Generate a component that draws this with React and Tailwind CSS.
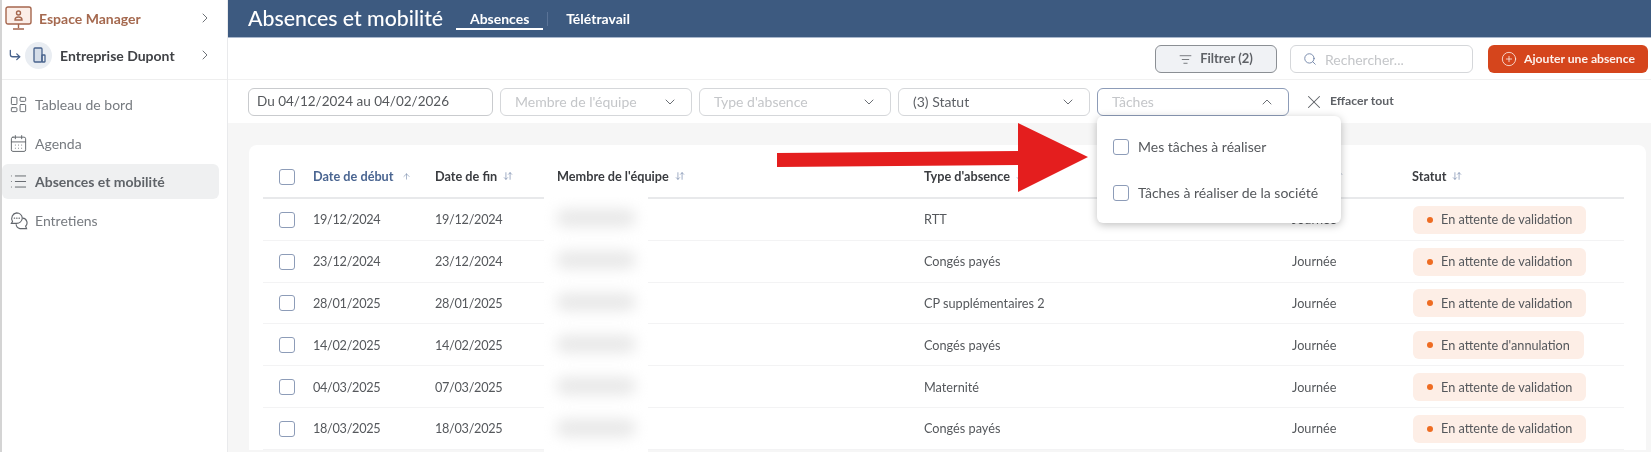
import { ChevronRight, ChevronDown, ChevronUp, LayoutDashboard, CalendarDays, List, ListFilter, Search, CirclePlus, X, ArrowDownUp, ArrowUp, CornerDownRight } from 'lucide-react'

const rows = [
  ['19/12/2024', '19/12/2024', 'RTT', 'En attente de validation'],
  ['23/12/2024', '23/12/2024', 'Congés payés', 'En attente de validation'],
  ['28/01/2025', '28/01/2025', 'CP supplémentaires 2', 'En attente de validation'],
  ['14/02/2025', '14/02/2025', 'Congés payés', "En attente d'annulation"],
  ['04/03/2025', '07/03/2025', 'Maternité', 'En attente de validation'],
  ['18/03/2025', '18/03/2025', 'Congés payés', 'En attente de validation'],
]

const gridCols = 'grid grid-cols-[50px_122px_122px_367px_368px_120px_1fr] items-center'

function Box() {
  return <span className="block h-[16px] w-[16px] rounded-[3px] border-[1.5px] border-[#8d9cb8] bg-white" />
}

function ChatIcon(props) {
  return (
    <svg viewBox="0 0 20 20" fill="none" stroke="currentColor" strokeWidth="1.2" {...props}>
      <path d="M8 2a6 6 0 0 1 6 5.500 6 6 0 0 1-6 5.500H2.500l1.200-2A6 6 0 0 1 8 2z" />
      <path d="M14.500 7.500a5 5 0 0 1 3 8.500l1 2.500h-7a5 5 0 0 1-4-4.500" />
      <path d="M5.500 7.500h.5M8 7.500h.5M10.500 7.500h.5" strokeLinecap="round" />
    </svg>
  )
}

function NavItem({ icon: Icon, label, active }) {
  return (
    <div className={`flex h-[35px] w-[217px] items-center gap-[7px] rounded-md pl-[7px] text-[14px] ${active ? 'bg-[#eff0f1] font-bold text-[#5f6368]' : 'text-[#777b80]'}`}>
      <Icon width={19} height={19} strokeWidth={1.2} className="shrink-0 text-[#62666c]" />
      {label}
    </div>
  )
}

function Sidebar() {
  return (
    <aside className="flex w-[228px] shrink-0 flex-col border-r border-[#e9eaec] border-l-2 border-l-[#d4d4d4] bg-white">
      <div className="flex h-[80px] flex-col border-b border-[#eeeeee]">
        <div className="flex h-[36px] items-center pl-[3px] pr-[14px]">
          <svg width="27" height="25" viewBox="0 0 27 25" fill="none" stroke="#a5664d" strokeWidth="1.4" className="shrink-0">
            <rect x="1" y="1" width="25" height="17" rx="2" fill="#fbeee8" />
            <path d="M13.500 18v4M8 23h11" />
            <circle cx="13.500" cy="7" r="2" />
            <path d="M10 14c0-2 1.500-3 3.500-3s3.500 1 3.500 3z" />
          </svg>
          <span className="ml-[7px] flex-1 text-[14px] font-bold text-[#a5694f]">Espace Manager</span>
          <ChevronRight size={16} strokeWidth={1.5} className="text-[#6f7378]" />
        </div>
        <div className="mt-[5px] flex h-[28px] items-center pl-[6px] pr-[14px]">
          <CornerDownRight size={14} strokeWidth={2.2} className="shrink-0 text-[#47628c]" />
          <span className="ml-[3px] flex h-[27px] w-[27px] shrink-0 items-center justify-center rounded-full bg-[#e9edf2]">
            <svg width="14" height="16" viewBox="0 0 14 16" fill="none" stroke="#47628c" strokeWidth="1.300">
              <rect x="2" y="1" width="8" height="14" rx="1" fill="#d5dde8" />
              <rect x="10" y="8" width="3" height="7" rx="0.500" />
            </svg>
          </span>
          <span className="ml-2 flex-1 text-[14px] font-bold text-[#3f4145]">Entreprise Dupont</span>
          <ChevronRight size={16} strokeWidth={1.5} className="text-[#6f7378]" />
        </div>
      </div>
      <nav className="mt-[7px] flex flex-col gap-[3.500px]">
        <NavItem icon={LayoutDashboard} label="Tableau de bord" />
        <NavItem icon={CalendarDays} label="Agenda" />
        <NavItem icon={List} label="Absences et mobilité" active />
        <NavItem icon={ChatIcon} label="Entretiens" />
      </nav>
    </aside>
  )
}

function Select({ label, width, placeholder, open }) {
  const Chevron = open ? ChevronUp : ChevronDown
  return (
    <div className={`flex h-[28px] items-center justify-between rounded-md border bg-white pl-[14px] pr-[13px] text-[14px] ${width} ${open ? 'border-[#8d9cb8]' : 'border-[#d5d7da]'}`}>
      <span className={placeholder ? 'text-[#c4c6c9]' : 'text-[#5e6166]'}>{label}</span>
      <Chevron size={16} strokeWidth={1.5} className="text-[#6b6f75]" />
    </div>
  )
}

function HeaderCell({ label, active }) {
  return (
    <div className={`flex items-center text-[12.700px] font-bold ${active ? 'text-[#4a6591]' : 'text-[#3a3c40]'}`}>
      {label}
      {active ? (
        <ArrowUp size={9} strokeWidth={1.5} className="ml-[9px] text-[#6a7fa3]" />
      ) : (
        <ArrowDownUp size={10} strokeWidth={1.5} className="ml-[6px] text-[#6a7fa3]" />
      )}
    </div>
  )
}

function Table() {
  return (
    <div className="relative ml-[21px] mr-[5px] mt-[22px] rounded-t-lg bg-white pl-[14px] pr-[22px]">
      <div className={`${gridCols} h-[54px] border-b-2 border-[#e8e9eb] pt-[11px]`}>
        <div className="pl-[16px]"><Box /></div>
        <HeaderCell label="Date de début" active />
        <HeaderCell label="Date de fin" />
        <HeaderCell label="Membre de l'équipe" />
        <HeaderCell label="Type d'absence" />
        <HeaderCell label="Durée" />
        <HeaderCell label="Statut" />
      </div>
      {rows.map((r, i) => (
        <div key={i} className={`${gridCols} h-[41.800px] border-b border-[#f3f3f4] pt-[1px] text-[12.700px] text-[#55585c]`}>
          <div className="pl-[16px]"><Box /></div>
          <div className="tracking-[-0.3px]">{r[0]}</div>
          <div className="tracking-[-0.3px]">{r[1]}</div>
          <div />
          <div>{r[2]}</div>
          <div>Journée</div>
          <div className="ml-[1px] flex h-[28px] w-fit items-center rounded-md bg-[#fdeee6] pl-[14px] pr-[14px]">
            <span className="mr-[8px] h-[6px] w-[6px] rounded-full bg-[#ee6c22]" />
            {r[3]}
          </div>
        </div>
      ))}
      {/* masked names */}
      <div className="absolute left-[295px] top-[52px] flex h-[262px] w-[104px] flex-col items-center overflow-hidden bg-white pt-[12px]">
        {rows.map((r, i) => (
          <div key={i} className="mb-[24px] h-[18px] w-[80px] shrink-0 rounded-full bg-[#e8e8e8] blur-[7px]" />
        ))}
      </div>
    </div>
  )
}

export default function App() {
  return (
    <div className="relative flex h-[452px] w-[1651px] overflow-hidden bg-white font-['Lato','Liberation_Sans',sans-serif] blur-[0.6px]">
      <Sidebar />
      <main className="flex min-w-0 flex-1 flex-col bg-[#f6f6f6]">
        <header className="flex h-[38px] shrink-0 items-center border-b border-[#a9b7cc] bg-[#3d5a80] pl-[20px] text-white">
          <h1 className="text-[21.300px] font-medium">Absences et mobilité</h1>
          <div className="ml-[13px] flex h-full items-center">
            <div className="relative flex h-full w-[87px] items-center justify-center text-[14px] font-bold">
              Absences
              <span className="absolute bottom-[7px] left-0 right-0 h-[2px] bg-white" />
            </div>
            <span className="mx-[4px] h-[14px] w-px bg-[#5a7397]" />
            <div className="ml-[14px] text-[14px] font-bold">Télétravail</div>
          </div>
        </header>
        <div className="flex h-[42px] shrink-0 items-center justify-end border-b border-[#f1f1f1] bg-white pr-[3px] pt-[1px]">
          <button className="flex h-[28px] w-[122px] items-center justify-center gap-[8px] rounded-md border-[1.5px] border-[#8b8f94] bg-[#f0f2f5] text-[13px] font-bold text-[#5e6166]">
            <ListFilter size={13} strokeWidth={1.5} />
            Filtrer (2)
          </button>
          <div className="ml-[13px] flex h-[28px] w-[183px] items-center gap-[8px] rounded-md border border-[#d5d7da] pl-[12px] text-[14px] text-[#c4c6c9]">
            <Search size={14} strokeWidth={1.5} className="text-[#6a7fa3]" />
            Rechercher...
          </div>
          <button className="ml-[15px] flex h-[28px] w-[160px] items-center justify-center gap-[7px] rounded-md bg-[#d5451c] text-[12.200px] font-bold text-[#fdf1ec]">
            <CirclePlus size={16} strokeWidth={1.2} />
            Ajouter une absence
          </button>
        </div>
        <div className="flex h-[43px] shrink-0 items-center gap-[7px] bg-white pl-[20px]">
          <div className="flex h-[28px] w-[245px] items-center rounded-md border border-[#c9cbce] pl-[8px] text-[13.500px] text-[#55585c]">Du 04/12/2024 au 04/02/2026</div>
          <Select label="Membre de l'équipe" width="w-[192px]" placeholder />
          <Select label="Type d'absence" width="w-[192px]" placeholder />
          <Select label="(3) Statut" width="w-[192px]" />
          <Select label="Tâches" width="w-[192px]" placeholder open />
          <div className="ml-[7px] flex items-center gap-[5px] text-[12.200px] font-bold text-[#5e6166]">
            <X size={22} strokeWidth={1.1} />
            Effacer tout
          </div>
        </div>
        <Table />
      </main>

      {/* open dropdown */}
      <div className="absolute left-[1097px] top-[116px] flex h-[107px] w-[244px] flex-col justify-center gap-[30px] rounded-md bg-white pl-[16px] text-[14px] text-[#55585c] shadow-[0_2px_8px_rgba(0,0,0,0.25)]">
        <div className="flex h-[16px] items-center gap-[9px]"><Box />Mes tâches à réaliser</div>
        <div className="flex h-[16px] items-center gap-[9px]"><Box />Tâches à réaliser de la société</div>
      </div>

      {/* annotation arrow */}
      <svg className="absolute left-[770px] top-[118px]" width="325" height="80" viewBox="0 0 325 80">
        <polygon points="7,35 248,33 248,5 318,39 248,74 248,47 7,49" fill="#e41e1e" />
      </svg>
    </div>
  )
}
